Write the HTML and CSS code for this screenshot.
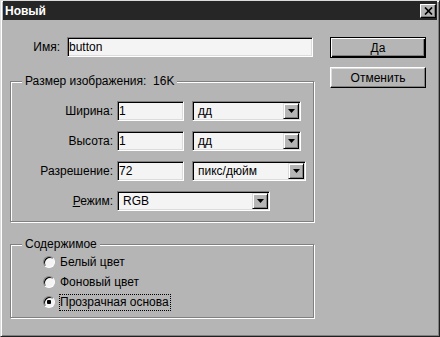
FILE: index.html
```html
<!DOCTYPE html>
<html lang="ru">
<head>
  <meta charset="UTF-8" />
  <title>Новый</title>
  <link rel="stylesheet" href="styles.css">
</head>
<body>
  <div class="window">
    <div class="titlebar">
      <span class="title">Новый</span>
      <button class="close">
        <svg width="9" height="8" viewBox="0 0 9 8"><path d="M1 0.5L8 7.5M8 0.5L1 7.5" stroke="#000" stroke-width="1.7"/></svg>
      </button>
    </div>

    <div class="main">
      <div class="left">
        <div class="name-row">
          <span class="name-label">Имя:</span>
          <div class="field name-field">button</div>
        </div>

        <fieldset class="group size-group">
          <legend>Размер изображения:&nbsp; 16K</legend>
          <div class="row">
            <span class="row-label">Ширина:</span>
            <div class="field num">1</div>
            <div class="select unit">дд<span class="arrow"><svg width="7" height="4" viewBox="0 0 7 4"><path d="M0 0h7L3.5 4z"/></svg></span></div>
          </div>
          <div class="row">
            <span class="row-label">Высота:</span>
            <div class="field num">1</div>
            <div class="select unit">дд<span class="arrow"><svg width="7" height="4" viewBox="0 0 7 4"><path d="M0 0h7L3.5 4z"/></svg></span></div>
          </div>
          <div class="row">
            <span class="row-label">Разрешение:</span>
            <div class="field num">72</div>
            <div class="select res-unit">пикс/дюйм<span class="arrow"><svg width="7" height="4" viewBox="0 0 7 4"><path d="M0 0h7L3.5 4z"/></svg></span></div>
          </div>
          <div class="row mode-row">
            <span class="row-label"><u>Р</u>ежим:</span>
            <div class="select mode">RGB<span class="arrow"><svg width="7" height="4" viewBox="0 0 7 4"><path d="M0 0h7L3.5 4z"/></svg></span></div>
          </div>
        </fieldset>

        <fieldset class="group content-group">
          <legend>Содержимое</legend>
          <div class="radio-row"><span class="radio"></span><span class="radio-label">Белый цвет</span></div>
          <div class="radio-row"><span class="radio"></span><span class="radio-label">Фоновый цвет</span></div>
          <div class="radio-row"><span class="radio checked"></span><span class="radio-label focused">Прозрачная основа</span></div>
        </fieldset>
      </div>

      <div class="buttons">
        <button class="btn default">Да</button>
        <button class="btn">Отменить</button>
      </div>
    </div>
  </div>
</body>
</html>
```

FILE: styles.css
```css
body {
  margin: 0;
  padding: 0;
}
.window {
  width: 440px;
  height: 337px;
  box-sizing: border-box;
  background: #b5b5b5;
  border: 1px solid;
  border-color: #dcdcdc #202020 #202020 #dcdcdc;
  box-shadow: inset 1px 1px #fff, inset -1px -1px #808080;
  padding: 0 2px;
  font-family: "Liberation Sans", Arial, sans-serif;
  font-size: 12px;
  color: #000;
}
.titlebar {
  height: 19px;
  background: #262626;
  display: flex;
  align-items: center;
  justify-content: space-between;
  padding: 0 1px 0 2px;
}
.title {
  color: #fff;
  font-weight: bold;
  font-size: 12px;
}
.close {
  width: 16px;
  height: 14px;
  padding: 0;
  box-sizing: border-box;
  background: #b5b5b5;
  border: 1px solid;
  border-color: #fff #000 #000 #fff;
  box-shadow: inset -1px -1px #808080;
  display: flex;
  align-items: center;
  justify-content: center;
}
.main {
  display: flex;
  padding: 17px 0 0 7px;
}
.left {
  width: 305px;
}
.name-row {
  display: flex;
  align-items: center;
  height: 20px;
}
.name-label {
  width: 50px;
  text-align: right;
  margin-right: 7px;
}
.field {
  box-sizing: border-box;
  height: 20px;
  line-height: 18px;
  background: #f4f4f4;
  border: 1px solid;
  border-color: #808080 #fff #fff #808080;
  box-shadow: inset 1px 1px #000, inset -1px -1px #dcdcdc;
  padding: 0 1px;
}
.name-field {
  width: 246px;
}
.group {
  width: 304px;
  box-sizing: border-box;
  margin: 0;
  border: 1px solid #808080;
  box-shadow: inset 1px 1px #fff, 1px 1px #fff;
}
.group legend {
  margin-left: 11px;
  padding: 0 3px;
  line-height: 14px;
  background: #b5b5b5;
}
.size-group {
  margin-top: 17px;
  padding: 13px 0 10px;
}
.row {
  display: flex;
  align-items: center;
  margin-bottom: 10px;
}
.row.mode-row {
  margin-top: 1px;
  margin-bottom: 0;
}
.row-label {
  width: 102px;
  text-align: right;
  margin-right: 4px;
}
.num {
  width: 67px;
  margin-right: 8px;
}
.select {
  box-sizing: border-box;
  height: 20px;
  display: flex;
  align-items: center;
  background: #f4f4f4;
  border: 1px solid;
  border-color: #808080 #fff #fff #808080;
  box-shadow: inset 1px 1px #000, inset -1px -1px #dcdcdc;
  padding-left: 5px;
}
.unit {
  width: 109px;
}
.res-unit {
  width: 114px;
}
.mode {
  width: 153px;
}
.arrow {
  margin-left: auto;
  margin-right: 1px;
  width: 16px;
  height: 16px;
  box-sizing: border-box;
  background: #b5b5b5;
  border: 1px solid;
  border-color: #dcdcdc #000 #000 #dcdcdc;
  box-shadow: inset 1px 1px #fff, inset -1px -1px #808080;
  display: flex;
  align-items: center;
  justify-content: center;
}
.content-group {
  margin-top: 15px;
  padding: 1px 0 5px;
}
.radio-row {
  display: flex;
  align-items: center;
  height: 20px;
  padding-left: 32px;
}
.radio {
  width: 12px;
  height: 12px;
  box-sizing: border-box;
  border-radius: 50%;
  background: #f4f4f4;
  border: 1px solid;
  border-color: #808080 #fff #fff #808080;
  box-shadow: inset 1px 1px #000;
  margin-right: 4px;
}
.radio.checked {
  background: radial-gradient(circle, #000 0, #000 2px, #f4f4f4 2.5px);
}
.radio-label {
  border: 1px dotted transparent;
  line-height: 15px;
  padding-right: 1px;
}
.radio-label.focused {
  border-color: #000;
}
.buttons {
  margin-left: 15px;
  display: flex;
  flex-direction: column;
  gap: 9px;
}
.btn {
  width: 96px;
  height: 21px;
  box-sizing: border-box;
  padding: 0;
  background: #b5b5b5;
  border: 1px solid;
  border-color: #fff #000 #000 #fff;
  box-shadow: inset -1px -1px #808080, inset 1px 1px #dcdcdc;
  font: inherit;
  color: #000;
}
.btn.default {
  border-color: #000;
  box-shadow: inset 1px 1px #fff, inset -1px -1px #000, inset -2px -2px #808080;
}
```
